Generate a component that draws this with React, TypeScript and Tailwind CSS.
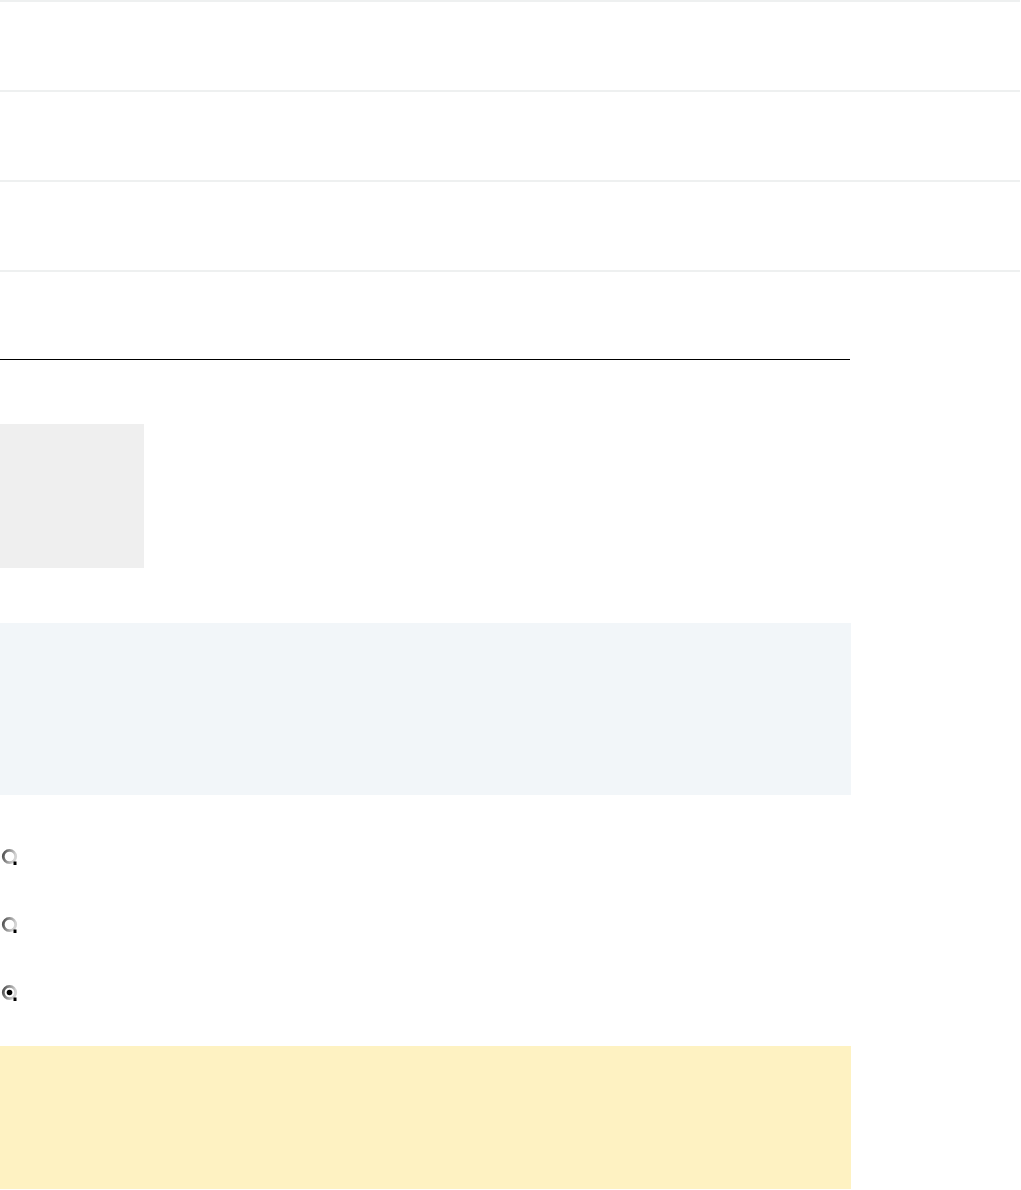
import React from "react";

function Radio({ checked }: { checked?: boolean }) {
  const id = checked ? "rgc" : "rg";
  return (
    <svg width="18" height="18" viewBox="0 0 18 18" className="block">
      <defs>
        <linearGradient id={id} x1="0" y1="0" x2="1" y2="0.3">
          <stop offset="0" stopColor="#4a4a4a" />
          <stop offset="0.45" stopColor="#8c8c8c" />
          <stop offset="1" stopColor="#d4d4d4" />
        </linearGradient>
      </defs>
      <circle cx="8.5" cy="8.5" r="6.2" fill="#ffffff" stroke={`url(#${id})`} strokeWidth="2.8" />
      <rect x="12.5" y="13.5" width="3" height="3.5" fill="#000000" />
      {checked && <circle cx="8.5" cy="8.5" r="2.8" fill="#000000" />}
    </svg>
  );
}

export default function App() {
  return (
    <div className="w-[1021px] min-h-[1190px] bg-white flex flex-col overflow-hidden">
      <div className="w-[1020px] h-[90px] border-t-2 border-[#eef0f0]" />
      <div className="w-[1020px] h-[90px] border-t-2 border-[#eef0f0]" />
      <div className="w-[1020px] h-[90px] border-t-2 border-[#eef0f0]" />
      <div className="w-[1020px] h-[89px] border-t-2 border-[#eef0f0]" />
      <div className="w-[850px] h-px bg-black" />
      <div className="mt-[64px] w-[144px] h-[144px] bg-[#efefef]" />
      <div className="mt-[55px] w-[851px] h-[172px] bg-[#f2f6f9]" />
      <div className="mt-[53px] ml-[1px] flex flex-col gap-[50px]">
        <Radio />
        <Radio />
        <Radio checked />
      </div>
      <div className="mt-[44px] w-[851px] h-[143px] bg-[#fef2c2]" />
    </div>
  );
}
